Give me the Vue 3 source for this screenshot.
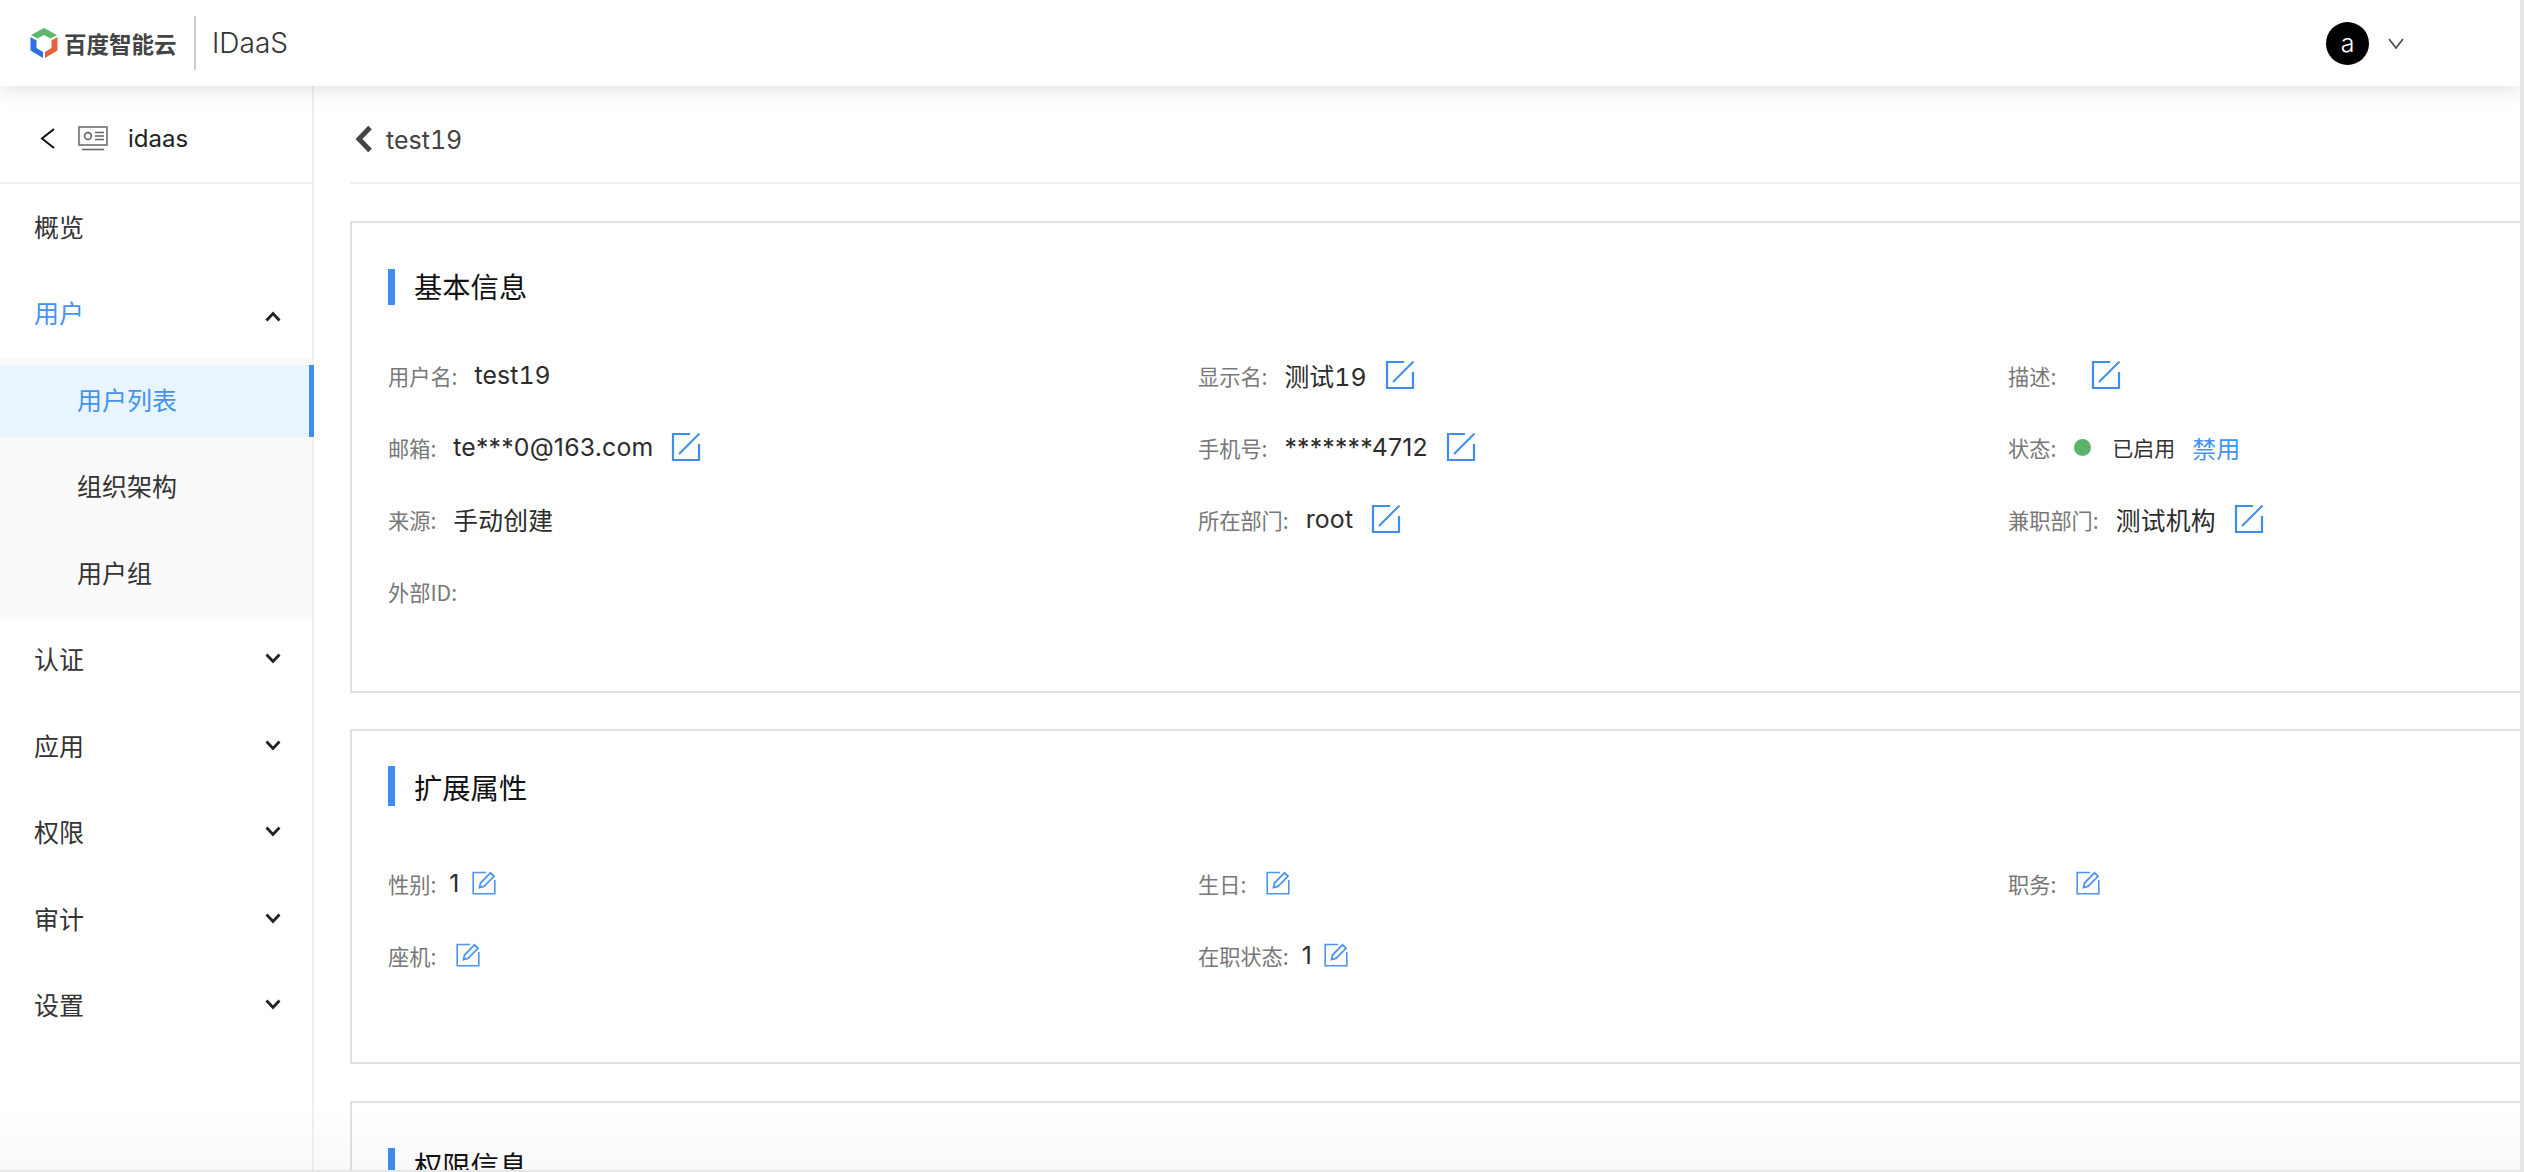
<script setup>
const menu = [
  { label: '认证' }, { label: '应用' }, { label: '权限' }, { label: '审计' }, { label: '设置' }
]
const basic = [
  { label: '用户名:', value: 'test19', num: true },
  { label: '显示名:', value: '测试19', edit: true, num: true },
  { label: '描述:', value: '', edit: true },
  { label: '邮箱:', value: 'te***0@163.com', edit: true },
  { label: '手机号:', value: '*******4712', edit: true },
  { label: '状态:', status: true },
  { label: '来源:', value: '手动创建' },
  { label: '所在部门:', value: 'root', edit: true },
  { label: '兼职部门:', value: '测试机构', edit: true },
  { label: '外部ID:', value: '' }
]
const ext = [
  { label: '性别:', value: '1' },
  { label: '生日:', value: '' },
  { label: '职务:', value: '' },
  { label: '座机:', value: '' },
  { label: '在职状态:', value: '1' }
]
</script>

<template>
  <div class="page">
    <div class="viewport">
      <header class="topbar">
        <div class="brand">
          <svg class="logo" viewBox="0 0 28 30" width="28" height="30">
            <path d="M14 0 L27 7 L20.5 10.5 L14 7 L7.5 10.5 L1 7 Z" fill="#5cb86a" />
            <path d="M0.5 9 L6.5 12.5 L6.5 20 L13 24 L13 30 L0.5 22.5 Z" fill="#2f6fe0" />
            <path d="M27.5 9 L21.5 12.5 L21.5 20 L15 24 L15 30 L27.5 22.5 Z" fill="#e8623c" />
          </svg>
          <span class="brand-name">百度智能云</span>
          <i class="brand-sep"></i>
          <span class="brand-app">IDaaS</span>
        </div>
        <div class="user">
          <span class="avatar">a</span>
          <svg width="16" height="11" viewBox="0 0 16 11" class="user-caret">
            <path d="M1 1 L8 10 L15 1" fill="none" stroke="#444" stroke-width="1.6" />
          </svg>
        </div>
      </header>
      <div class="body">
        <aside class="side">
          <div class="side-head">
            <svg width="15" height="21" viewBox="0 0 15 21">
              <path d="M14 1 L2 10.5 L14 20" fill="none" stroke="#111" stroke-width="2" />
            </svg>
            <svg class="side-ico" width="30" height="25" viewBox="0 0 30 25">
              <rect x="1" y="1" width="28" height="18" fill="none" stroke="#666" stroke-width="1.5" />
              <circle cx="10" cy="10" r="3.4" fill="none" stroke="#666" stroke-width="1.6" />
              <path d="M17 6.5 H26 M17 10 H26 M17 13.5 H26" stroke="#666" stroke-width="1.6" />
              <path d="M4 23.5 H26" stroke="#666" stroke-width="1.6" />
            </svg>
            <span>idaas</span>
          </div>
          <nav class="nav">
            <div class="nav-item">概览</div>
            <div class="nav-item on">
              用户
              <svg class="up" width="16" height="11" viewBox="0 0 16 11"><path d="M1.5 9.5 L8 2.5 L14.5 9.5" fill="none" stroke="#222" stroke-width="2.8" /></svg>
            </div>
            <div class="sub">
              <div class="sub-item active">用户列表</div>
              <div class="sub-item">组织架构</div>
              <div class="sub-item">用户组</div>
            </div>
            <div class="nav-item" v-for="m in menu" :key="m.label">
              {{ m.label }}
              <svg class="down" width="16" height="11" viewBox="0 0 16 11"><path d="M1.5 1.5 L8 8.5 L14.5 1.5" fill="none" stroke="#222" stroke-width="2.8" /></svg>
            </div>
          </nav>
        </aside>
        <main class="main">
          <div class="crumb">
            <svg width="18" height="28" viewBox="0 0 18 28">
              <path d="M15 2.5 L4 14 L15 25.5" fill="none" stroke="#444" stroke-width="5" />
            </svg>
            <span>test19</span>
          </div>
          <section class="card card-a">
            <h2 class="title">基本信息</h2>
            <div class="grid">
              <div class="cell" v-for="r in basic" :key="r.label">
                <span class="lbl">{{ r.label }}</span>
                <template v-if="r.status">
                  <i class="dot"></i>
                  <span class="state">已启用</span>
                  <a class="link">禁用</a>
                </template>
                <span v-else-if="r.value" class="val" :class="{ num: r.num }">{{ r.value }}</span>
                <span v-if="r.edit" class="pen-big">
                  <svg width="30" height="30" viewBox="0 0 30 30">
                    <path d="M19 2 H2 V28 H28 V12" fill="none" stroke="#3d8eee" stroke-width="2.2" />
                    <path d="M8 22 L28.5 1.5" fill="none" stroke="#3d8eee" stroke-width="2" />
                  </svg>
                </span>
              </div>
            </div>
          </section>
          <section class="card card-b">
            <h2 class="title tall">扩展属性</h2>
            <div class="grid">
              <div class="cell" v-for="r in ext" :key="r.label">
                <span class="lbl">{{ r.label }}</span>
                <span v-if="r.value" class="val">{{ r.value }}</span>
                <span class="pen-small" :class="{ nov: !r.value }">
                  <svg width="24" height="24" viewBox="0 0 24 24">
                    <path d="M14 1.5 H1.2 V22.8 H22.8 V9" fill="none" stroke="#4b95ee" stroke-width="1.6" />
                    <path d="M7.5 16.5 L8.5 12 L18.5 1.8 L22 5.3 L12 15.5 Z" fill="none" stroke="#4b95ee" stroke-width="1.8" />
                  </svg>
                </span>
              </div>
            </div>
          </section>
          <section class="card card-c">
            <h2 class="title">权限信息</h2>
          </section>
        </main>
      </div>
    </div>
  </div>
</template>

<style>
html, body { margin: 0; height: 100%; overflow: hidden; background: #e6e6e6; }
</style>

<style scoped>
.page {
  width: 2524px;
  height: 1172px;
  padding: 0 4px 2px 0;
  box-sizing: border-box;
  font-family: "Inter", "Noto Sans CJK SC", sans-serif;
  color: #333;
}
.viewport {
  width: 100%; height: 100%; background: #fff; overflow: hidden;
  display: flex; flex-direction: column; position: relative;
}
.viewport::after {
  content: ""; position: absolute; left: 0; right: 0; bottom: 0; height: 70px;
  background: linear-gradient(rgba(0, 0, 0, 0), rgba(0, 0, 0, 0.022)); pointer-events: none;
}
.topbar {
  flex: none;
  height: 86px;
  display: flex;
  align-items: center;
  justify-content: space-between;
  background: #fff;
  box-shadow: 0 4px 20px rgba(0, 0, 0, 0.12);
  position: relative;
  z-index: 2;
}
.brand { display: flex; align-items: center; padding-left: 30px; }
.logo { display: block; }
.brand-name { margin-left: 6px; font-size: 22.5px; font-weight: 700; color: #444; font-family: "Noto Sans CJK SC", sans-serif; }
.brand-sep { width: 2px; height: 54px; background: #ccc; margin: 0 16.5px 0 17px; }
.brand-app { font-size: 28px; font-weight: 300; color: #333; }
.user { display: flex; align-items: center; padding-right: 116px; }
.avatar {
  width: 43px; height: 43px; border-radius: 50%; background: #000; color: #fff;
  display: flex; align-items: center; justify-content: center; font-size: 25px; font-weight: 300;
}
.user-caret { margin-left: 19px; }
.body { flex: 1; display: flex; min-height: 0; }
.side { flex: none; width: 314px; box-sizing: border-box; border-right: 2px solid #f0f0f0; background: #fff; }
.side-head {
  height: 98px; box-sizing: border-box; border-bottom: 2px solid #eeeef3;
  display: flex; align-items: center; padding: 8px 0 0 40px; font-size: 24px; color: #222; font-weight: 400;
}
.side-ico { margin: 0 20px 0 23px; }
.nav { font-family: "Noto Sans CJK SC", sans-serif; font-size: 25px; color: #333; font-weight: 400; }
.nav-item {
  height: 86.4px; box-sizing: border-box; display: flex; align-items: center; justify-content: space-between;
  padding: 0 31px 3px 34px;
}
.nav-item.on { color: #4593f0; }
.up { margin-top: 8px; }
.down { margin-top: 1px; }
.sub { background: #fafafa; padding: 7px 0 0; height: 259px; box-sizing: border-box; margin-top: 1px; }
.sub-item { height: 86.4px; box-sizing: border-box; display: flex; align-items: center; padding: 0 0 3px 77px; }
.sub-item.active {
  height: 72px; background: #e8f4fe; color: #4593f0; margin-right: -2px;
  border-right: 5px solid #3d8eee; margin-bottom: 7px;
}
.main { flex: 1; min-width: 0; padding: 0 0 0 36px; overflow: hidden; }
.crumb {
  height: 98px; box-sizing: border-box; border-bottom: 2px solid #eeeef3;
  display: flex; align-items: center; font-size: 25px; color: #444; gap: 13px; padding: 10px 0 0 5px;
  font-variant-numeric: tabular-nums;
}
.crumb span { margin-top: 2px; }
.card { width: 2300px; box-sizing: border-box; border: 2px solid #e0e0e0; background: #fff; }
.card-a { margin-top: 37px; height: 472px; padding: 46px 0 0 36px; }
.card-b { margin-top: 36px; height: 335px; padding: 35px 0 0 36px; }
.card-c { margin-top: 37px; height: 120px; padding: 45px 0 0 36px; }
.title {
  margin: 0; height: 36px; line-height: 34px; border-left: 7px solid #3d8eee; padding-left: 19px;
  font-size: 28.3px; font-weight: 400; color: #111; font-family: "Noto Sans CJK SC", sans-serif;
}
.title.tall { height: 40px; line-height: 41px; }
.grid { display: grid; grid-template-columns: repeat(3, 810px); grid-auto-rows: 72px; margin-top: 34px; }
.card-b .grid { margin-top: 41px; }
.cell { display: flex; align-items: center; white-space: nowrap; }
.lbl { font-size: 21.2px; color: #777; font-family: "Noto Sans CJK SC", sans-serif; margin-right: 17px; }
.card-b .lbl { margin-right: 13px; }
.val { font-size: 24.8px; color: #2c2c2c; letter-spacing: 0.2px; }
.val.num { font-variant-numeric: tabular-nums; letter-spacing: 0.1px; }
.pen-big { display: flex; margin-left: 18px; }
.pen-small { display: flex; margin-left: 12px; }
.pen-small.nov { margin-left: 7px; }
.dot { width: 17px; height: 17px; border-radius: 50%; background: #5ab26b; margin: 0 21px 0 1px; }
.state { font-size: 21px; color: #333; font-family: "Noto Sans CJK SC", sans-serif; }
.link { font-size: 24px; color: #4593f0; margin-left: 17px; font-family: "Noto Sans CJK SC", sans-serif; }
</style>
